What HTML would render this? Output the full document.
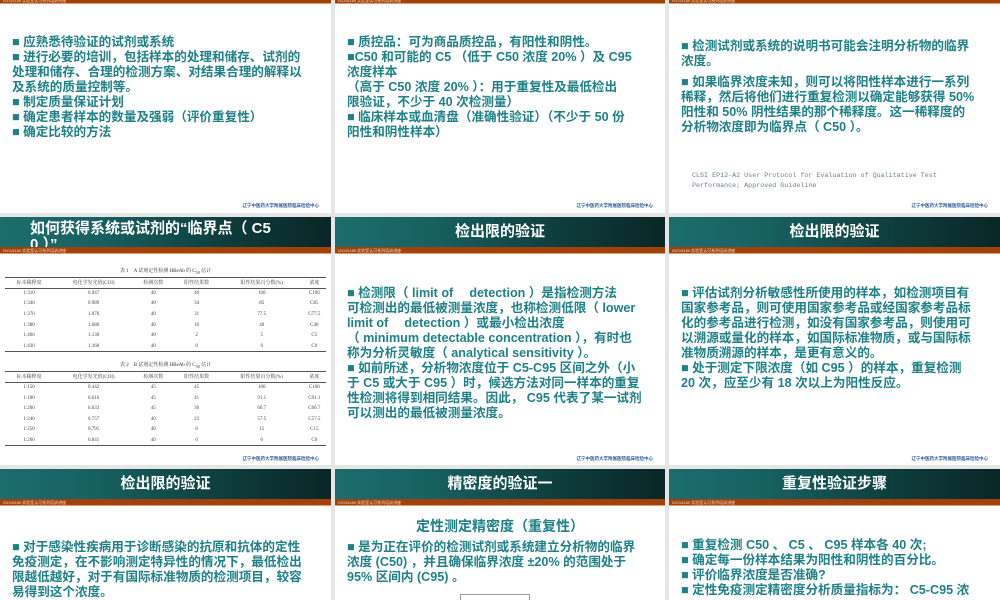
<!DOCTYPE html>
<html><head><meta charset="utf-8"><style>
*{margin:0;padding:0;box-sizing:border-box}
body{width:1000px;height:600px;background:#e6e6e6;position:relative;overflow:hidden;font-family:"Liberation Sans","Noto Sans CJK SC",sans-serif}
.s{position:absolute;background:#fff;overflow:hidden}
.hd{position:absolute;left:0;right:0;height:30px;background:linear-gradient(90deg,#1d6d6d 0%,#176060 30%,#0e3b3b 70%,#0a2626 100%);color:#fff;font-weight:bold;font-size:15px;text-align:center;line-height:30px}
.or{position:absolute;left:0;right:0;height:7px;background:#a3410c;color:#f3d8c8;font-size:4px;line-height:7px;padding-left:3px;border-bottom:1px solid #e0a070}
.ft{position:absolute;right:12px;font-size:4.5px;color:#2a5a9a;font-weight:bold}
.tx{position:absolute;color:#1e8187;font-weight:bold;font-size:12.6px;line-height:15px;white-space:nowrap}
table{border-collapse:collapse;font-family:"Liberation Serif","Noto Serif CJK SC",serif;font-size:5px;color:#444;width:321px}
td{text-align:center;height:10.6px;padding:0}
.tt{font-size:5px;text-align:center;color:#333;font-family:"Liberation Serif","Noto Serif CJK SC",serif;width:321px}
</style></head><body>

<!-- Row 1 -->
<div class="s" style="left:0;top:0;width:331px;height:213px">
 <div class="or" style="top:-3px">ISO15189 实验室认可系列培训讲座</div>
 <div class="tx" style="left:12px;top:35px">■ 应熟悉待验证的试剂或系统<br>■ 进行必要的培训，包括样本的处理和储存、试剂的<br>处理和储存、合理的检测方案、对结果合理的解释以<br>及系统的质量控制等。<br>■ 制定质量保证计划<br>■ 确定患者样本的数量及强弱（评价重复性）<br>■ 确定比较的方法</div>
 <div class="ft" style="top:203px">辽宁中医药大学附属医院临床检验中心</div>
</div>
<div class="s" style="left:335px;top:0;width:330px;height:213px">
 <div class="or" style="top:-3px">ISO15189 实验室认可系列培训讲座</div>
 <div class="tx" style="left:12px;top:35px">■ 质控品：可为商品质控品，有阳性和阴性。<br>■C50 和可能的 C5 （低于 C50 浓度 20% ）及 C95<br>浓度样本<br>（高于 C50 浓度 20% ）：用于重复性及最低检出<br>限验证，不少于 40 次检测量）<br>■ 临床样本或血清盘（准确性验证）（不少于 50 份<br>阳性和阴性样本）</div>
 <div class="ft" style="top:203px">辽宁中医药大学附属医院临床检验中心</div>
</div>
<div class="s" style="left:669px;top:0;width:331px;height:213px">
 <div class="or" style="top:-3px">ISO15189 实验室认可系列培训讲座</div>
 <div class="tx" style="left:12px;top:39px">■ 检测试剂或系统的说明书可能会注明分析物的临界<br>浓度。</div>
 <div class="tx" style="left:12px;top:75px">■ 如果临界浓度未知，则可以将阳性样本进行一系列<br>稀释，然后将他们进行重复检测以确定能够获得 50%<br>阳性和 50% 阴性结果的那个稀释度。这一稀释度的<br>分析物浓度即为临界点（ C50 ）。</div>
 <div style="position:absolute;left:23px;top:171px;font-family:'Liberation Mono',monospace;font-size:6.7px;line-height:10px;color:#6a7f9a">CLSI EP12-A2 User Protocol for Evaluation of Qualitative Test<br>Performance; Approved Guideline</div>
 <div class="ft" style="top:203px">辽宁中医药大学附属医院临床检验中心</div>
</div>

<!-- Row 2 -->
<div class="s" style="left:0;top:217px;width:331px;height:248px">
 <div class="hd" style="top:0;text-align:left;padding-left:30px;line-height:16px;padding-top:4px">如何获得系统或试剂的“临界点（ C5<br>0 ）”</div>
 <div class="or" style="top:30px">ISO15189 实验室认可系列培训讲座</div>
 <div style="position:absolute;left:5px;top:50px">
  <div class="tt">表 1　A 试剂定性检测 HBeAb 的 C<sub>50</sub> 估计</div>
  <table style="border-top:1.5px solid #555;border-bottom:1.5px solid #555;margin-top:2px">
   <tr style="border-bottom:1px solid #555"><td>标本稀释度</td><td>电化学发光值(COI)</td><td>检测次数</td><td>阳性结果数</td><td>阳性结果百分数(%)</td><td>浓度</td></tr>
   <tr><td>1:310</td><td>0.947</td><td>40</td><td>40</td><td>100</td><td>C100</td></tr>
   <tr><td>1:340</td><td>0.989</td><td>40</td><td>34</td><td>85</td><td>C85</td></tr>
   <tr><td>1:370</td><td>1.070</td><td>40</td><td>31</td><td>77.5</td><td>C77.5</td></tr>
   <tr><td>1:380</td><td>1.080</td><td>40</td><td>16</td><td>40</td><td>C40</td></tr>
   <tr><td>1:400</td><td>1.130</td><td>40</td><td>2</td><td>5</td><td>C5</td></tr>
   <tr><td>1:430</td><td>1.160</td><td>40</td><td>0</td><td>0</td><td>C0</td></tr>
  </table>
  <div class="tt" style="margin-top:9px">表 2　B 试剂定性检测 HBeAb 的 C<sub>50</sub> 估计</div>
  <table style="border-top:1.5px solid #555;border-bottom:1.5px solid #555;margin-top:2px">
   <tr style="border-bottom:1px solid #555"><td>标本稀释度</td><td>电化学发光值(COI)</td><td>检测次数</td><td>阳性结果数</td><td>阳性结果百分数(%)</td><td>浓度</td></tr>
   <tr><td>1:150</td><td>0.442</td><td>45</td><td>45</td><td>100</td><td>C100</td></tr>
   <tr><td>1:180</td><td>0.616</td><td>45</td><td>41</td><td>91.1</td><td>C91.1</td></tr>
   <tr><td>1:200</td><td>0.633</td><td>45</td><td>30</td><td>66.7</td><td>C66.7</td></tr>
   <tr><td>1:240</td><td>0.757</td><td>40</td><td>23</td><td>57.5</td><td>C57.5</td></tr>
   <tr><td>1:250</td><td>0.791</td><td>40</td><td>6</td><td>15</td><td>C15</td></tr>
   <tr><td>1:260</td><td>0.841</td><td>40</td><td>0</td><td>0</td><td>C0</td></tr>
  </table>
 </div>
 <div class="ft" style="top:239px">辽宁中医药大学附属医院临床检验中心</div>
</div>
<div class="s" style="left:335px;top:217px;width:330px;height:248px">
 <div class="hd" style="top:0">检出限的验证</div>
 <div class="or" style="top:30px">ISO15189 实验室认可系列培训讲座</div>
 <div class="tx" style="left:12px;top:69px">■ 检测限（ limit of 　detection ）是指检测方法<br>可检测出的最低被测量浓度，也称检测低限（ lower<br>limit of 　detection ）或最小检出浓度<br>（ minimum detectable concentration ），有时也<br>称为分析灵敏度（ analytical sensitivity ）。<br>■ 如前所述，分析物浓度位于 C5-C95 区间之外（小<br>于 C5 或大于 C95 ）时，候选方法对同一样本的重复<br>性检测将得到相同结果。因此， C95 代表了某一试剂<br>可以测出的最低被测量浓度。</div>
 <div class="ft" style="top:239px">辽宁中医药大学附属医院临床检验中心</div>
</div>
<div class="s" style="left:669px;top:217px;width:331px;height:248px">
 <div class="hd" style="top:0">检出限的验证</div>
 <div class="or" style="top:30px">ISO15189 实验室认可系列培训讲座</div>
 <div class="tx" style="left:12px;top:69px">■ 评估试剂分析敏感性所使用的样本，如检测项目有<br>国家参考品，则可使用国家参考品或经国家参考品标<br>化的参考品进行检测，如没有国家参考品，则使用可<br>以溯源或量化的样本，如国际标准物质，或与国际标<br>准物质溯源的样本，是更有意义的。<br>■ 处于测定下限浓度（如 C95 ）的样本，重复检测<br>20 次，应至少有 18 次以上为阳性反应。</div>
 <div class="ft" style="top:239px">辽宁中医药大学附属医院临床检验中心</div>
</div>

<!-- Row 3 -->
<div class="s" style="left:0;top:469px;width:331px;height:131px">
 <div class="hd" style="top:0">检出限的验证</div>
 <div class="or" style="top:30px">ISO15189 实验室认可系列培训讲座</div>
 <div class="tx" style="left:12px;top:71px">■ 对于感染性疾病用于诊断感染的抗原和抗体的定性<br>免疫测定，在不影响测定特异性的情况下，最低检出<br>限越低越好，对于有国际标准物质的检测项目，较容<br>易得到这个浓度。</div>
</div>
<div class="s" style="left:335px;top:469px;width:330px;height:131px">
 <div class="hd" style="top:0">精密度的验证一</div>
 <div class="or" style="top:30px">ISO15189 实验室认可系列培训讲座</div>
 <div class="tx" style="left:0;width:330px;text-align:center;top:50px;font-size:14px">定性测定精密度（重复性）</div>
 <div class="tx" style="left:12px;top:71px">■ 是为正在评价的检测试剂或系统建立分析物的临界<br>浓度 (C50) ，并且确保临界浓度 ±20% 的范围处于<br>95% 区间内 (C95) 。</div>
 <div style="position:absolute;left:125px;top:125px;width:70px;height:8px;border:1px solid #999;border-bottom:none"></div>
</div>
<div class="s" style="left:669px;top:469px;width:331px;height:131px">
 <div class="hd" style="top:0">重复性验证步骤</div>
 <div class="or" style="top:30px">ISO15189 实验室认可系列培训讲座</div>
 <div class="tx" style="left:12px;top:69px">■ 重复检测 C50 、 C5 、 C95 样本各 40 次;<br>■ 确定每一份样本结果为阳性和阴性的百分比。<br>■ 评价临界浓度是否准确?<br>■ 定性免疫测定精密度分析质量指标为： C5-C95 浓</div>
</div>
</body></html>
